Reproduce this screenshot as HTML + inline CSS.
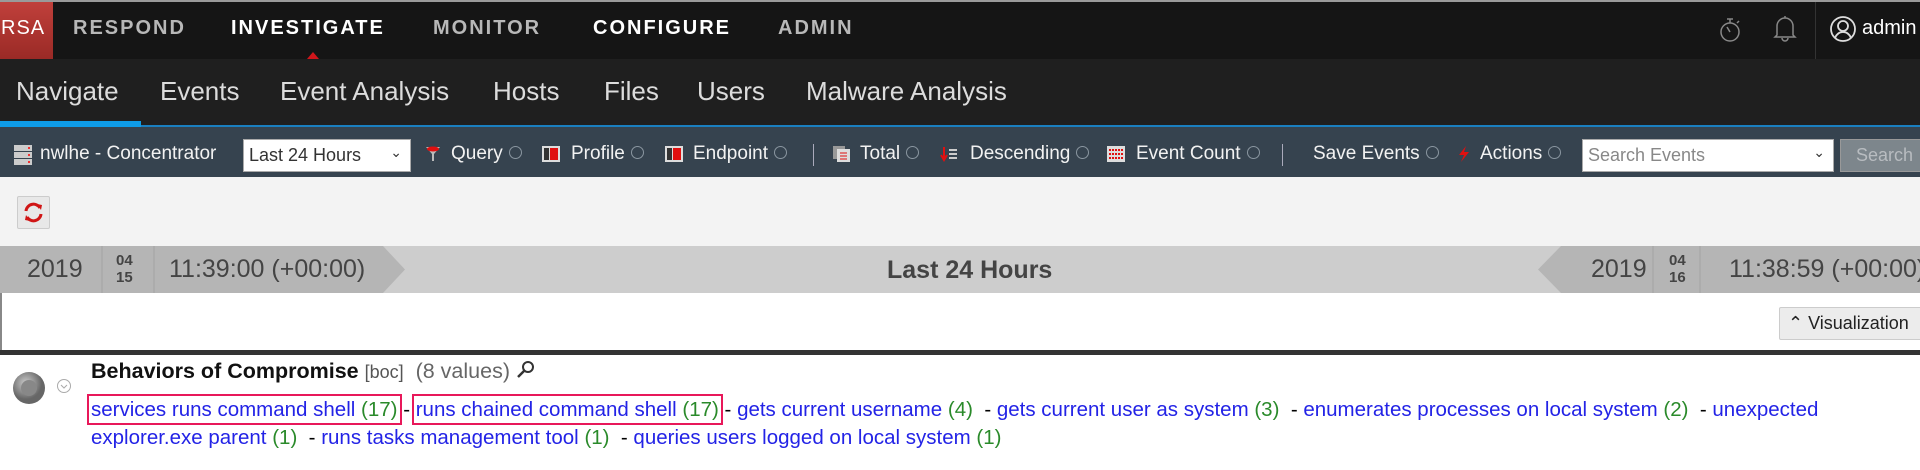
<!DOCTYPE html>
<html><head><meta charset="utf-8"><style>
*{margin:0;padding:0;box-sizing:border-box}
body{width:1920px;height:470px;overflow:hidden;background:#fff;font-family:"Liberation Sans",sans-serif;position:relative}
.a{position:absolute;white-space:nowrap}
#top{left:0;top:0;width:1920px;height:59px;background:#151515;border-top:2px solid #9a9a9a}
.m{top:17px;font-size:20px;font-weight:bold;letter-spacing:2px;color:#b8b8b8}
#nav{left:0;top:59px;width:1920px;height:68px;background:#1f1f1f;border-bottom:2px solid #1a7fc0}
.t{top:76px;font-size:26px;color:#dcdcdc}
#tb{left:0;top:127px;width:1920px;height:50px;background:#36434f}
.ti{top:143px;font-size:19px;color:#f2f2f2}
.dd{display:inline-block;width:13px;height:13px;border:1px solid #8a96a0;border-radius:50%;vertical-align:middle;margin-left:6px;margin-top:-2px}
.ic{position:absolute;top:146px;width:18px;height:16px}
#grey{left:0;top:177px;width:1920px;height:69px;background:#f3f3f3}
#tl{left:0;top:246px;width:1920px;height:47px;background:#cdcdcd}
.tx{font-size:25px;color:#444;top:255px}
.lk{color:#2323e6}.g{color:#2a8a2a}
.bx{outline:2px solid #e8185a;outline-offset:2px}
</style></head><body>
<div class="a" id="top"></div>
<div class="a" style="left:0;top:2px;width:53px;height:57px;background:linear-gradient(#c0403b,#9a2a26)"></div>
<div class="a" style="left:1px;top:17px;font-size:20px;color:#fff;letter-spacing:1px">RSA</div>
<div class="a m" style="left:73px">RESPOND</div>
<div class="a m" style="left:231px;color:#fff">INVESTIGATE</div>
<div class="a" style="left:307px;top:52px;width:0;height:0;border-left:6px solid transparent;border-right:6px solid transparent;border-bottom:7px solid #d0161b"></div>
<div class="a m" style="left:433px">MONITOR</div>
<div class="a m" style="left:593px;color:#fff">CONFIGURE</div>
<div class="a m" style="left:778px">ADMIN</div>
<svg class="a" style="left:1718px;top:14px" width="24" height="30" viewBox="0 0 24 30"><circle cx="12" cy="18" r="9" fill="none" stroke="#888" stroke-width="1.5"/><path d="M9 5h6M12 5v4M12 18l-3-5M19 9l2-2" stroke="#888" stroke-width="1.5" fill="none"/></svg>
<svg class="a" style="left:1772px;top:13px" width="26" height="30" viewBox="0 0 26 30"><path d="M5 22V13a8 8 0 0 1 16 0v9l2 2H3zM13 3v2M10 25a3 3 0 0 0 6 0" fill="none" stroke="#888" stroke-width="1.5"/></svg>
<div class="a" style="left:1815px;top:2px;width:1px;height:57px;background:#333"></div>
<svg class="a" style="left:1828px;top:14px" width="30" height="30" viewBox="0 0 30 30"><circle cx="15" cy="15" r="12" fill="none" stroke="#ddd" stroke-width="1.8"/><circle cx="15" cy="12" r="5" fill="none" stroke="#ddd" stroke-width="1.8"/><path d="M7 24c2-5 5-6 8-6s6 1 8 6" fill="none" stroke="#ddd" stroke-width="1.8"/></svg>
<div class="a" style="left:1862px;top:17px;font-size:20px;color:#fff">admin</div>

<div class="a" id="nav"></div>
<div class="a" style="left:0;top:121px;width:141px;height:6px;background:#0e9ce8"></div>
<div class="a t" style="left:16px">Navigate</div>
<div class="a t" style="left:160px">Events</div>
<div class="a t" style="left:280px">Event Analysis</div>
<div class="a t" style="left:493px">Hosts</div>
<div class="a t" style="left:604px">Files</div>
<div class="a t" style="left:697px">Users</div>
<div class="a t" style="left:806px">Malware Analysis</div>

<div class="a" id="tb"></div>
<svg class="ic" style="left:13px;top:144px;width:20px;height:22px" viewBox="0 0 20 22"><rect x="1" y="1" width="18" height="6" fill="#ccc"/><rect x="1" y="8" width="18" height="6" fill="#ccc"/><rect x="1" y="15" width="18" height="6" fill="#ccc"/><circle cx="16" cy="4" r="1" fill="red"/><circle cx="16" cy="11" r="1" fill="red"/><circle cx="16" cy="18" r="1" fill="red"/></svg>
<div class="a ti" style="left:40px">nwlhe - Concentrator</div>
<div class="a" style="left:243px;top:139px;width:168px;height:33px;background:#fff;border:1px solid #aaa;font-size:18px;color:#333;padding:5px 5px">Last 24 Hours<span style="position:absolute;right:8px;top:4px;font-size:14px">&#8964;</span></div>
<svg class="ic" style="left:424px" viewBox="0 0 18 16"><path d="M2 1h14l-6 7v7h-2V8z" fill="#bbb"/><ellipse cx="9" cy="3" rx="6" ry="2.5" fill="#e01010"/></svg>
<div class="a ti" style="left:451px">Query<span class="dd"></span></div>
<svg class="ic" style="left:542px" viewBox="0 0 18 16"><rect width="18" height="16" fill="#ddd"/><rect x="2" y="2" width="5" height="12" fill="#333"/><rect x="8" y="2" width="8" height="12" fill="#e01010"/></svg>
<div class="a ti" style="left:571px">Profile<span class="dd"></span></div>
<svg class="ic" style="left:665px" viewBox="0 0 18 16"><rect width="18" height="16" fill="#ddd"/><rect x="2" y="2" width="5" height="12" fill="#333"/><rect x="8" y="2" width="8" height="12" fill="#e01010"/></svg>
<div class="a ti" style="left:693px">Endpoint<span class="dd"></span></div>
<div class="a" style="left:813px;top:144px;width:1px;height:22px;background:#aab"></div>
<svg class="ic" style="left:833px" viewBox="0 0 18 16"><rect x="0" y="0" width="12" height="13" fill="#999"/><rect x="4" y="3" width="13" height="13" fill="#ddd"/><path d="M7 7h7M7 10h7M7 13h7" stroke="#e01010"/></svg>
<div class="a ti" style="left:860px">Total<span class="dd"></span></div>
<svg class="ic" style="left:940px" viewBox="0 0 18 16"><path d="M4 1v11M1 9l3 5 3-5" stroke="#e01010" stroke-width="2" fill="none"/><path d="M9 4h8M9 8h8M9 12h8" stroke="#ccc" stroke-width="2"/></svg>
<div class="a ti" style="left:970px">Descending<span class="dd"></span></div>
<svg class="ic" style="left:1107px" viewBox="0 0 18 16"><rect width="18" height="16" fill="#ddd"/><path d="M2 4h14M2 8h14M2 12h14" stroke="#e01010" stroke-width="2" stroke-dasharray="2 1"/></svg>
<div class="a ti" style="left:1136px">Event Count<span class="dd"></span></div>
<div class="a" style="left:1282px;top:144px;width:1px;height:22px;background:#aab"></div>
<div class="a ti" style="left:1313px">Save Events<span class="dd"></span></div>
<svg class="ic" style="left:1455px" viewBox="0 0 18 16"><path d="M11 0L4 9h5l-3 7 8-10H9z" fill="#e01010"/></svg>
<div class="a ti" style="left:1480px">Actions<span class="dd"></span></div>
<div class="a" style="left:1582px;top:139px;width:252px;height:33px;background:#fff;border:1px solid #aaa;font-size:18px;color:#888;padding:5px 5px">Search Events<span style="position:absolute;right:8px;top:4px;font-size:14px;color:#333">&#8964;</span></div>
<div class="a" style="left:1840px;top:139px;width:90px;height:33px;background:#7d868c;border:1px solid #999;font-size:18px;color:#b8bcc0;padding:5px 15px">Search</div>

<div class="a" id="grey"></div>
<div class="a" style="left:17px;top:196px;width:33px;height:33px;background:#e8e8e8;border:1px solid #ccc;border-radius:2px"></div>
<svg class="a" style="left:22px;top:201px" width="23" height="23" viewBox="0 0 23 23"><path d="M4 10a7.5 7.5 0 0 1 14-3" fill="none" stroke="#d01515" stroke-width="3"/><path d="M19 13a7.5 7.5 0 0 1-14 3" fill="none" stroke="#d01515" stroke-width="3"/><path d="M15 3l5 1-1 5z" fill="#d01515"/><path d="M8 20l-5-1 1-5z" fill="#d01515"/></svg>

<div class="a" id="tl"></div>
<svg class="a" style="left:0;top:246px" width="410" height="47"><polygon points="0,0 383,0 405,23.5 383,47 0,47" fill="#b5b5b5"/><line x1="102" y1="0" x2="102" y2="47" stroke="#a3a3a3"/><line x1="154" y1="0" x2="154" y2="47" stroke="#a3a3a3"/></svg>
<svg class="a" style="left:1530px;top:246px" width="390" height="47"><polygon points="390,0 31,0 8,23.5 31,47 390,47" fill="#b5b5b5"/><line x1="123" y1="0" x2="123" y2="47" stroke="#a3a3a3"/><line x1="170" y1="0" x2="170" y2="47" stroke="#a3a3a3"/></svg>
<div class="a tx" style="left:27px">2019</div>
<div class="a" style="left:116px;top:252px;font-size:15px;font-weight:bold;color:#444;line-height:17px;text-align:center">04<br>15</div>
<div class="a tx" style="left:169px">11:39:00 (+00:00)</div>
<div class="a" style="left:887px;top:256px;font-size:25px;font-weight:bold;color:#444">Last 24 Hours</div>
<div class="a tx" style="left:1591px">2019</div>
<div class="a" style="left:1669px;top:252px;font-size:15px;font-weight:bold;color:#444;line-height:17px;text-align:center">04<br>16</div>
<div class="a tx" style="left:1729px">11:38:59 (+00:00)</div>

<div class="a" style="left:0;top:293px;width:2px;height:57px;background:#888"></div>
<div class="a" style="left:1779px;top:307px;width:150px;height:33px;background:#ececec;border:1px solid #ccc;border-radius:2px;font-size:18px;color:#222;padding:5px 8px">&#8963; Visualization</div>
<div class="a" style="left:0;top:350px;width:1920px;height:5px;background:#333"></div>

<svg class="a" style="left:12px;top:371px" width="36" height="36"><defs><radialGradient id="r" cx="40%" cy="35%"><stop offset="0" stop-color="#ccc"/><stop offset="1" stop-color="#666"/></radialGradient></defs><circle cx="17" cy="17" r="16" fill="url(#r)"/><circle cx="17" cy="17" r="8" fill="#888"/></svg>
<svg class="a" style="left:56px;top:378px" width="16" height="16"><circle cx="8" cy="8" r="6.5" fill="none" stroke="#aaa"/><path d="M5 7l3 3 3-3" stroke="#aaa" fill="none"/></svg>
<div class="a" style="left:91px;top:359px;font-size:21.5px;color:#111"><b>Behaviors of Compromise</b> <span style="font-size:18px;color:#555">[boc]</span> &nbsp;<span style="color:#666">(8 values)</span> <svg width="20" height="22" style="vertical-align:top" viewBox="0 0 20 20"><circle cx="12" cy="7" r="5" fill="none" stroke="#333" stroke-width="2"/><path d="M8 11l-6 6" stroke="#333" stroke-width="2.5"/></svg></div>
<div class="a" style="left:91px;top:396px;font-size:20.5px;line-height:28px"><span class="bx"><span class="lk">services runs command shell</span> <span class="g">(17)</span></span> - <span class="bx"><span class="lk">runs chained command shell</span> <span class="g">(17)</span></span> - <span class="lk">gets current username</span> <span class="g">(4)</span> &nbsp;- <span class="lk">gets current user as system</span> <span class="g">(3)</span> &nbsp;- <span class="lk">enumerates processes on local system</span> <span class="g">(2)</span> &nbsp;- <span class="lk">unexpected</span><br><span class="lk">explorer.exe parent</span> <span class="g">(1)</span> &nbsp;- <span class="lk">runs tasks management tool</span> <span class="g">(1)</span> &nbsp;- <span class="lk">queries users logged on local system</span> <span class="g">(1)</span></div>
</body></html>
